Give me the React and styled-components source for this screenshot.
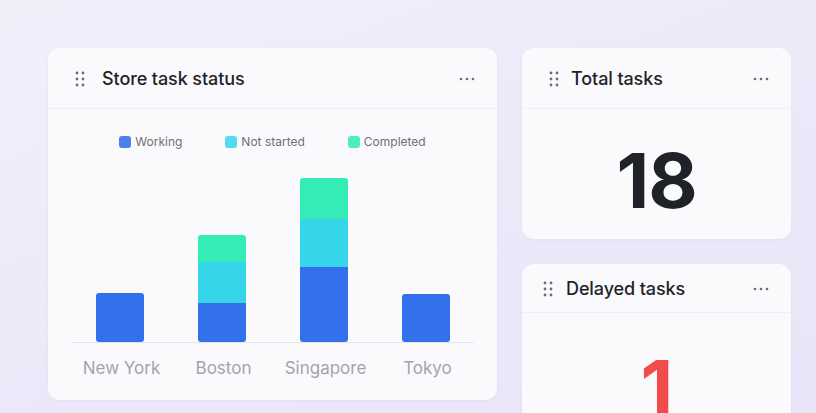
import React from "react";
import styled, { createGlobalStyle } from "styled-components";

const Global = createGlobalStyle`
  html, body { margin: 0; padding: 0; }
  body {
    width: 816px;
    height: 413px;
    overflow: hidden;
    font-family: Inter, "Noto Sans", sans-serif;
    background: linear-gradient(160deg, #f0f0fb 0%, #eceaf9 45%, #e8e5f8 100%);
  }
`;

const Board = styled.div`
  display: flex;
  gap: 25px;
  padding: 48px 0 0 48px;
  align-items: flex-start;
`;

const Column = styled.div`
  display: flex;
  flex-direction: column;
  gap: 25px;
`;

const Card = styled.section`
  width: ${(p) => p.$w}px;
  height: ${(p) => p.$h}px;
  background: #fafafd;
  border-radius: 12px;
  box-shadow: 0 1px 3px rgba(90, 80, 160, 0.06);
  display: flex;
  flex-direction: column;
  overflow: hidden;
`;

const Header = styled.header`
  height: ${(p) => p.$h || 60}px;
  flex: none;
  display: flex;
  align-items: center;
  padding: 1px 22px 0 ${(p) => p.$pl || 27}px;
  box-sizing: border-box;
  border-bottom: 1.5px solid #f1f0f7;
  gap: ${(p) => p.$gap || 17}px;
`;

const Title = styled.h2`
  margin: 0;
  flex: 1;
  font-size: 18px;
  font-weight: 500;
  color: #1f2329;
  letter-spacing: -0.1px;
`;

const Grip = () => (
  <svg width="10" height="16" viewBox="0 0 10 16">
    {[2, 8].map((x) =>
      [2, 8, 14].map((y) => <circle key={`${x}-${y}`} cx={x} cy={y} r="1.4" fill="#6b6e76" />)
    )}
  </svg>
);

const More = () => (
  <svg width="16" height="4" viewBox="0 0 16 4">
    {[2, 8, 14].map((x) => (
      <circle key={x} cx={x} cy="2" r="1.3" fill="#6b6e76" />
    ))}
  </svg>
);

const Body = styled.div`
  flex: 1;
  display: flex;
  flex-direction: column;
  align-items: center;
  padding-top: ${(p) => p.$pt || 0}px;
`;

const Legend = styled.div`
  display: flex;
  gap: 43px;
  margin-top: 25px;
`;

const LegendItem = styled.div`
  display: flex;
  align-items: center;
  gap: 4px;
  font-size: 12px;
  color: #6e7078;
`;

const Swatch = styled.span`
  width: 12px;
  height: 12px;
  border-radius: 3px;
  background: ${(p) => p.$c};
`;

const Plot = styled.div`
  margin-top: 31px;
  width: 402px;
  height: 163px;
  box-sizing: border-box;
  padding-left: 24px;
  display: flex;
  gap: 54px;
  align-items: flex-end;
  border-bottom: 1.5px solid #e6e5ee;
`;

const Bar = styled.div`
  width: 48px;
  display: flex;
  flex-direction: column;
  border-radius: 3px;
  overflow: hidden;
`;

const Segment = styled.div`
  background: ${(p) => p.$c};
`;

const Labels = styled.div`
  width: 408px;
  display: grid;
  grid-template-columns: repeat(4, 102px);
  margin: 15px 0 0 4px;
`;

const Label = styled.span`
  text-align: center;
  font-size: 17px;
  color: #a3a4ab;
`;

const BigNumber = styled.div`
  font-size: ${(p) => p.$size || 76}px;
  font-weight: 700;
  line-height: 1;
  color: ${(p) => p.$c};
  letter-spacing: -1px;
`;

const COLORS = {
  working: "#3370eb",
  notStarted: "#36d5ea",
  completed: "#34ecb5",
};

const stores = [
  { name: "New York", working: 49, notStarted: 0, completed: 0 },
  { name: "Boston", working: 39, notStarted: 41, completed: 27 },
  { name: "Singapore", working: 75, notStarted: 48, completed: 41 },
  { name: "Tokyo", working: 48, notStarted: 0, completed: 0 },
];

export default function App() {
  return (
    <>
      <Global />
      <Board>
        <Card $w={449} $h={352}>
          <Header $h={61}>
            <Grip />
            <Title>Store task status</Title>
            <More />
          </Header>
          <Body>
            <Legend>
              <LegendItem>
                <Swatch $c="#4d80ec" />
                Working
              </LegendItem>
              <LegendItem>
                <Swatch $c="#52dcee" />
                Not started
              </LegendItem>
              <LegendItem>
                <Swatch $c="#4eecc0" />
                Completed
              </LegendItem>
            </Legend>
            <Plot>
              {stores.map((s) => (
                <Bar key={s.name}>
                  {s.completed > 0 && <Segment $c={COLORS.completed} style={{ height: s.completed }} />}
                  {s.notStarted > 0 && <Segment $c={COLORS.notStarted} style={{ height: s.notStarted }} />}
                  <Segment $c={COLORS.working} style={{ height: s.working }} />
                </Bar>
              ))}
            </Plot>
            <Labels>
              {stores.map((s) => (
                <Label key={s.name}>{s.name}</Label>
              ))}
            </Labels>
          </Body>
        </Card>
        <Column>
          <Card $w={269} $h={191}>
            <Header $pl={27} $gap={12} $h={61}>
              <Grip />
              <Title>Total tasks</Title>
              <More />
            </Header>
            <Body $pt={33}>
              <BigNumber $c="#1f2329">18</BigNumber>
            </Body>
          </Card>
          <Card $w={269} $h={200}>
            <Header $pl={21} $gap={13} $h={49}>
              <Grip />
              <Title>Delayed tasks</Title>
              <More />
            </Header>
            <Body $pt={36}>
              <BigNumber $c="#f24b4b">1</BigNumber>
            </Body>
          </Card>
        </Column>
      </Board>
    </>
  );
}
